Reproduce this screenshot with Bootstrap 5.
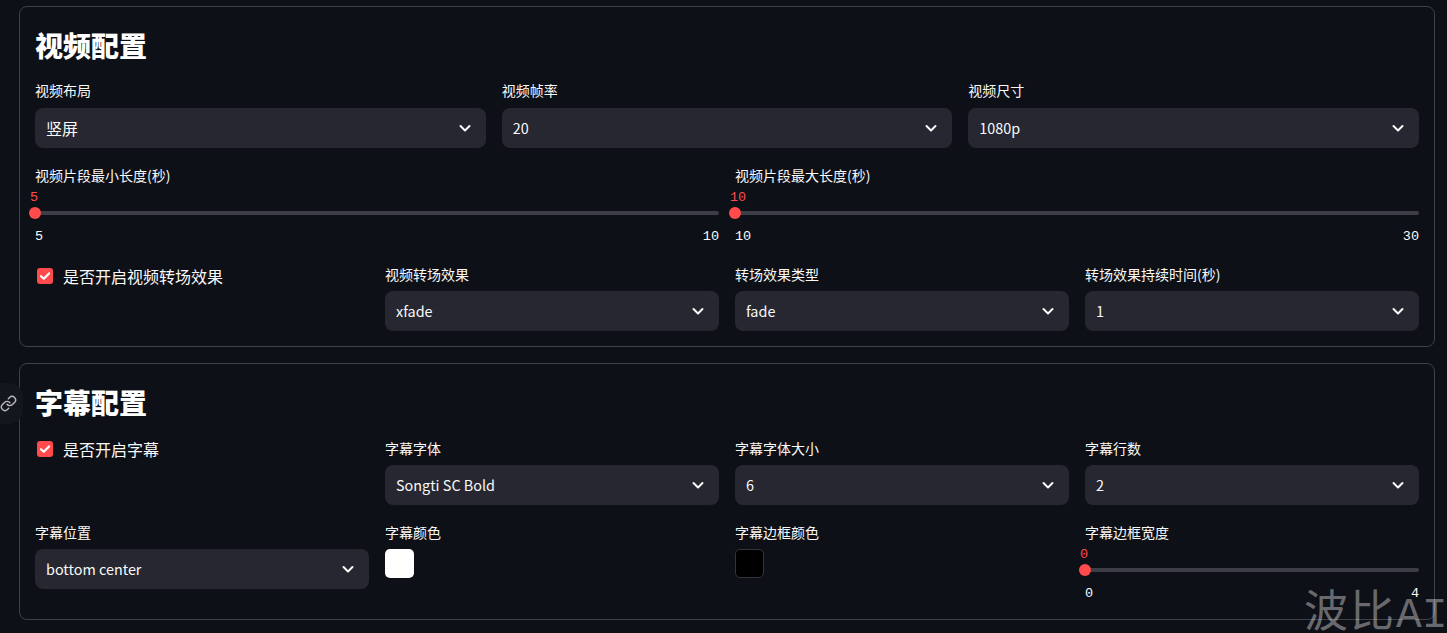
<!DOCTYPE html>
<html lang="zh">
<head>
<meta charset="utf-8">
<title>配置</title>
<link href="https://cdn.jsdelivr.net/npm/bootstrap@5.3.0/dist/css/bootstrap.min.css" rel="stylesheet">
<style>
html,body{height:633px;overflow:hidden}
body{background:#0e1017;color:#fafafa;font-family:"Noto Sans CJK SC","Noto Sans",sans-serif;position:relative}
.page-wrap{padding:6px 12px 0 19px}
.panel{border:1px solid #3f4147;border-radius:8px;padding:15px;margin-bottom:16px}
.panel-one{height:341px}
.panel-two{height:257px}
.panel-title{font-size:28px;font-weight:900;line-height:46px;height:46px;margin:0 0 12px;color:#fff}
.panel-two .panel-title{margin-bottom:13px}
.field-label{font-size:14px;line-height:20px;height:20px;margin-bottom:7px;color:#fafafa;display:block}
.picker{height:40px;background:#262730;border-radius:8px;padding:0 14px 0 11px;font-size:14.4px;color:#fafafa}
.zh-val{font-size:16px}
.gap-top-a{margin-top:17px}
.gap-top-b{margin-top:19px}
.gap-top-c{margin-top:17px}
.slide{height:59px;position:relative;margin-top:1px}
.slide-value{position:absolute;top:4px;left:-5px;font:13.5px/16px "Liberation Mono",monospace;color:#ff4b4b}
.slide-track{position:absolute;top:25px;left:0;right:0;height:4px;border-radius:2px;background:#3c3d46}
.slide-thumb{position:absolute;top:21px;left:-6px;width:12px;height:12px;border-radius:50%;background:#ff4b4b}
.slide-ticks{position:absolute;top:42px;left:0;right:0;font:13.5px/18px "Liberation Mono",monospace;color:#fafafa}
.tick-box{width:16px;height:16px;border-radius:3px;background:#ff4b4b;margin:0 10px 0 2px;flex:none}
.check-line{font-size:16px;line-height:22px;color:#fafafa;padding-top:1px}
.panel-two .check-line{padding-top:0}
.swatch{width:29px;height:29px;border-radius:5px}
.swatch-white{background:#fff}
.swatch-black{background:#000;border:1px solid #32343a}
.anchor-tab{position:absolute;left:0;top:383px;width:23px;height:41px;background:#14161e;border-radius:0 14px 14px 0}
.mark-text{position:absolute;left:1304px;top:583px;font-size:44px;line-height:50px;letter-spacing:2px;white-space:nowrap;color:rgba(255,255,255,.38)}
.mark-latin{font:43px/50px "Liberation Mono",monospace;letter-spacing:0}
</style>
</head>
<body>
<div class="page-wrap">
  <section class="panel panel-one">
    <h2 class="panel-title">视频配置</h2>
    <div class="row gx-3">
      <div class="col-4"><label class="field-label">视频布局</label>
        <div class="picker d-flex align-items-center justify-content-between mt-2"><span class="zh-val">竖屏</span><svg width="14" height="14" viewBox="0 0 14 14" fill="none" stroke="#fafafa" stroke-width="2" stroke-linecap="round" stroke-linejoin="round"><path d="M2.5 5l4.5 4.5L11.5 5"/></svg></div></div>
      <div class="col-4"><label class="field-label">视频帧率</label>
        <div class="picker d-flex align-items-center justify-content-between mt-2"><span>20</span><svg width="14" height="14" viewBox="0 0 14 14" fill="none" stroke="#fafafa" stroke-width="2" stroke-linecap="round" stroke-linejoin="round"><path d="M2.5 5l4.5 4.5L11.5 5"/></svg></div></div>
      <div class="col-4"><label class="field-label">视频尺寸</label>
        <div class="picker d-flex align-items-center justify-content-between mt-2"><span>1080p</span><svg width="14" height="14" viewBox="0 0 14 14" fill="none" stroke="#fafafa" stroke-width="2" stroke-linecap="round" stroke-linejoin="round"><path d="M2.5 5l4.5 4.5L11.5 5"/></svg></div></div>
    </div>
    <div class="row gx-3 gap-top-a">
      <div class="col-6"><label class="field-label mb-0">视频片段最小长度(秒)</label>
        <div class="slide"><span class="slide-value">5</span><div class="slide-track"></div><div class="slide-thumb"></div><div class="slide-ticks d-flex justify-content-between"><span>5</span><span>10</span></div></div></div>
      <div class="col-6"><label class="field-label mb-0">视频片段最大长度(秒)</label>
        <div class="slide"><span class="slide-value">10</span><div class="slide-track"></div><div class="slide-thumb"></div><div class="slide-ticks d-flex justify-content-between"><span>10</span><span>30</span></div></div></div>
    </div>
    <div class="row gx-3 gap-top-b">
      <div class="col-3"><div class="check-line d-flex align-items-center"><span class="tick-box d-flex align-items-center justify-content-center"><svg width="12" height="12" viewBox="0 0 12 12" fill="none" stroke="#fff" stroke-width="2.2" stroke-linecap="round" stroke-linejoin="round"><path d="M2 6.2l2.8 2.6L10 3.4"/></svg></span><span>是否开启视频转场效果</span></div></div>
      <div class="col-3"><label class="field-label">视频转场效果</label>
        <div class="picker d-flex align-items-center justify-content-between"><span>xfade</span><svg width="14" height="14" viewBox="0 0 14 14" fill="none" stroke="#fafafa" stroke-width="2" stroke-linecap="round" stroke-linejoin="round"><path d="M2.5 5l4.5 4.5L11.5 5"/></svg></div></div>
      <div class="col-3"><label class="field-label">转场效果类型</label>
        <div class="picker d-flex align-items-center justify-content-between"><span>fade</span><svg width="14" height="14" viewBox="0 0 14 14" fill="none" stroke="#fafafa" stroke-width="2" stroke-linecap="round" stroke-linejoin="round"><path d="M2.5 5l4.5 4.5L11.5 5"/></svg></div></div>
      <div class="col-3"><label class="field-label">转场效果持续时间(秒)</label>
        <div class="picker d-flex align-items-center justify-content-between"><span>1</span><svg width="14" height="14" viewBox="0 0 14 14" fill="none" stroke="#fafafa" stroke-width="2" stroke-linecap="round" stroke-linejoin="round"><path d="M2.5 5l4.5 4.5L11.5 5"/></svg></div></div>
    </div>
  </section>
  <section class="panel panel-two">
    <h2 class="panel-title">字幕配置</h2>
    <div class="row gx-3">
      <div class="col-3"><div class="check-line d-flex align-items-center"><span class="tick-box d-flex align-items-center justify-content-center"><svg width="12" height="12" viewBox="0 0 12 12" fill="none" stroke="#fff" stroke-width="2.2" stroke-linecap="round" stroke-linejoin="round"><path d="M2 6.2l2.8 2.6L10 3.4"/></svg></span><span>是否开启字幕</span></div></div>
      <div class="col-3"><label class="field-label">字幕字体</label>
        <div class="picker d-flex align-items-center justify-content-between"><span>Songti SC Bold</span><svg width="14" height="14" viewBox="0 0 14 14" fill="none" stroke="#fafafa" stroke-width="2" stroke-linecap="round" stroke-linejoin="round"><path d="M2.5 5l4.5 4.5L11.5 5"/></svg></div></div>
      <div class="col-3"><label class="field-label">字幕字体大小</label>
        <div class="picker d-flex align-items-center justify-content-between"><span>6</span><svg width="14" height="14" viewBox="0 0 14 14" fill="none" stroke="#fafafa" stroke-width="2" stroke-linecap="round" stroke-linejoin="round"><path d="M2.5 5l4.5 4.5L11.5 5"/></svg></div></div>
      <div class="col-3"><label class="field-label">字幕行数</label>
        <div class="picker d-flex align-items-center justify-content-between"><span>2</span><svg width="14" height="14" viewBox="0 0 14 14" fill="none" stroke="#fafafa" stroke-width="2" stroke-linecap="round" stroke-linejoin="round"><path d="M2.5 5l4.5 4.5L11.5 5"/></svg></div></div>
    </div>
    <div class="row gx-3 gap-top-c">
      <div class="col-3"><label class="field-label">字幕位置</label>
        <div class="picker d-flex align-items-center justify-content-between"><span>bottom center</span><svg width="14" height="14" viewBox="0 0 14 14" fill="none" stroke="#fafafa" stroke-width="2" stroke-linecap="round" stroke-linejoin="round"><path d="M2.5 5l4.5 4.5L11.5 5"/></svg></div></div>
      <div class="col-3"><label class="field-label">字幕颜色</label><div class="swatch swatch-white"></div></div>
      <div class="col-3"><label class="field-label">字幕边框颜色</label><div class="swatch swatch-black"></div></div>
      <div class="col-3"><label class="field-label mb-0">字幕边框宽度</label>
        <div class="slide"><span class="slide-value">0</span><div class="slide-track"></div><div class="slide-thumb"></div><div class="slide-ticks d-flex justify-content-between"><span>0</span><span>4</span></div></div></div>
    </div>
  </section>
</div>
<div class="anchor-tab d-flex align-items-center justify-content-start"><svg width="17" height="17" viewBox="0 0 24 24" fill="none" stroke="#b9bac0" stroke-width="2" stroke-linecap="round" stroke-linejoin="round"><path d="M10 13a5 5 0 0 0 7.54.54l3-3a5 5 0 0 0-7.07-7.07l-1.72 1.71"/><path d="M14 11a5 5 0 0 0-7.54-.54l-3 3a5 5 0 0 0 7.07 7.07l1.71-1.71"/></svg></div>
<div class="mark-text">波比<span class="mark-latin">AI</span></div>
<script src="https://cdn.jsdelivr.net/npm/bootstrap@5.3.0/dist/js/bootstrap.bundle.min.js"></script>
</body>
</html>
